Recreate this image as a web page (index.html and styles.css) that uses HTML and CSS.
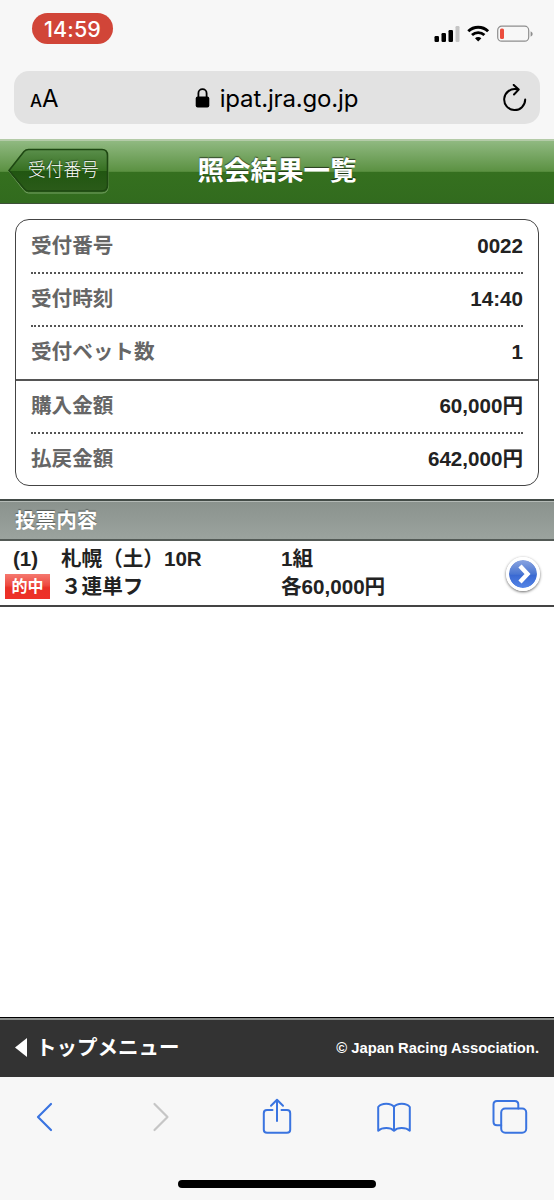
FILE: index.html
```html
<!DOCTYPE html>
<html lang="ja">
<head>
  <meta charset="UTF-8">
  <meta name="viewport" content="width=device-width, initial-scale=1">
  <title>照会結果一覧</title>
  <link rel="stylesheet" href="styles.css">
</head>
<body>

  <!-- ステータスバー -->
  <div class="status-bar">
    <span class="clock">14:59</span>
    <svg class="status-icons" width="100" height="18" viewBox="0 0 100 18">
      <rect x="0.5" y="11" width="4.5" height="6" rx="1.2"/>
      <rect x="7.5" y="8" width="4.5" height="9" rx="1.2"/>
      <rect x="14.5" y="5" width="4.5" height="12" rx="1.2"/>
      <rect x="21.5" y="1" width="4" height="16" rx="1.2" fill="#c5c5c5"/>
      <path d="M34.3 6.2a14.3 14.3 0 0 1 19.8 0M38 10a9.2 9.2 0 0 1 12.4 0" fill="none" stroke="#000" stroke-width="2.9"/>
      <path d="M44.2 16.5l-3.2-3.2a4.6 4.6 0 0 1 6.4 0z"/>
      <rect x="63.7" y="1.2" width="31" height="15" rx="4" fill="none" stroke="#8e8e8e" stroke-width="1.2"/>
      <rect x="66" y="3.5" width="4" height="10.5" rx="1.5" fill="#eb4d3d"/>
      <path d="M96.6 6.3q2.1 1 2.1 2.7t-2.1 2.7z" fill="#8e8e8e"/>
    </svg>
  </div>

  <!-- アドレスバー -->
  <div class="address-bar">
    <div class="text-size"><small>A</small>A</div>
    <div class="url">
      <svg width="15" height="20" viewBox="0 0 15 20">
        <rect x="0.7" y="8.5" width="13.6" height="11" rx="2"/>
        <path d="M3.4 9V5.2a4.1 4.1 0 0 1 8.2 0V9" fill="none" stroke="#000" stroke-width="1.8"/>
      </svg>
      <span>ipat.jra.go.jp</span>
    </div>
    <svg class="reload" width="24" height="28" viewBox="0 0 24 28" fill="none" stroke="#000" stroke-width="2" stroke-linecap="round" stroke-linejoin="round">
      <path d="M13.5 5.2A10.5 10.5 0 1 0 22.2 15.5M10.7 0.9l5 4.7-4.7 4.9"/>
    </svg>
  </div>

  <!-- ヘッダー -->
  <header class="header">
    <a class="back-btn" href="#">
      <svg width="101" height="46" viewBox="0 0 101 46">
        <defs>
          <linearGradient id="backBg" x1="0" y1="0" x2="0" y2="1">
            <stop offset="0" stop-color="#5a8f4b"/>
            <stop offset="0.51" stop-color="#377022"/>
            <stop offset="0.53" stop-color="#215611"/>
            <stop offset="1" stop-color="#2b5b19"/>
          </linearGradient>
        </defs>
        <path d="M1 23.5L16 4.5q1.8-2 4.5-2H94q6 0 6 6V39q0 6-6 6H20.5q-2.5 0-4.5-2.5z" fill="none" stroke="#77a165"/>
        <path d="M1 22.5L16 3.5q1.8-2 4.5-2H94q5.5 0 5.5 6V37q0 6-5.500 6H20.5q-2.5 0-4.5-2.5z" fill="url(#backBg)" stroke="#1e4712" stroke-width="1.6"/>
      </svg>
      <span>受付番号</span>
    </a>
    <h1>照会結果一覧</h1>
  </header>

  <main class="content">
    <!-- 受付情報 -->
    <dl class="summary">
      <div class="row"><dt>受付番号</dt><dd>0022</dd></div>
      <div class="row"><dt>受付時刻</dt><dd>14:40</dd></div>
      <div class="row"><dt>受付ベット数</dt><dd>1</dd></div>
      <div class="row divider"><dt>購入金額</dt><dd>60,000円</dd></div>
      <div class="row"><dt>払戻金額</dt><dd>642,000円</dd></div>
    </dl>

    <!-- 投票内容 -->
    <h2>投票内容</h2>
    <a class="bet" href="#">
      <div class="bet-no">
        <span>(1)</span>
        <span class="hit">的中</span>
      </div>
      <div class="bet-race">
        <span>札幌（土）10R</span>
        <span>３連単フ</span>
      </div>
      <div class="bet-amount">
        <span>1組</span>
        <span>各60,000円</span>
      </div>
      <span class="arrow">
        <svg width="14" height="20" viewBox="0 0 14 20"><path d="M3 2l7.5 8L3 18" fill="none" stroke="#fff" stroke-width="4.4"/></svg>
      </span>
    </a>
  </main>

  <!-- フッター -->
  <footer class="footer">
    <a class="top-menu" href="#">
      <svg width="12" height="19" viewBox="0 0 12 19"><path d="M12 0v19L0 9.5z" fill="#fff"/></svg>
      <span>トップメニュー</span>
    </a>
    <small>© Japan Racing Association.</small>
  </footer>

  <!-- ツールバー -->
  <nav class="toolbar">
    <div class="tools">
      <svg width="36" height="36" viewBox="0 0 36 36"><path d="M25 6L12 19l13 13"/></svg>
      <svg class="disabled" width="36" height="36" viewBox="0 0 36 36"><path d="M11.5 6l13 13-13 13"/></svg>
      <svg class="thin" width="36" height="36" viewBox="0 0 36 36"><path d="M13.5 12H8q-3.200 0-3.200 3.200v16.500q0 3.100 3.200 3.100h20q3.200 0 3.200-3.100V15.200Q31.200 12 28 12h-5.500M18 23V2M12 7.700l6-6 6 6"/></svg>
      <svg class="thin" width="36" height="36" viewBox="0 0 36 36"><path d="M18 9v23.500M18 9C15 4.800 5.500 4.800 2.200 9v23.700c4-3.600 12.300-3.600 15.800 0 3.500-3.600 11.800-3.600 15.800 0V9C30.500 4.800 21 4.800 18 9z"/></svg>
      <svg class="thin" width="36" height="36" viewBox="0 0 36 36"><rect x="9.2" y="10.5" width="25" height="24.2" rx="4"/><path d="M9.200 27.200H5q-3.500 0-3.500-3.500V6.500Q1.500 3 5 3h17.800q3.500 0 3.500 3.500v4"/></svg>
    </div>
    <div class="home-indicator"></div>
  </nav>

</body>
</html>
```
FILE: styles.css
```css
* {
  box-sizing: border-box;
}

body {
  margin: 0;
  height: 1200px;
  display: flex;
  flex-direction: column;
  font-family: "Liberation Sans", "Noto Sans CJK JP", sans-serif;
  background: #f7f7f7;
  color: #222;
  overflow: hidden;
}

a {
  color: inherit;
  text-decoration: none;
}

svg {
  display: block;
  flex: none;
}

/* ステータスバー */
.status-bar {
  height: 71px;
  padding: 13px 20px 0 32px;
  display: flex;
  justify-content: space-between;
  align-items: flex-start;
}

.clock {
  width: 81px;
  height: 31px;
  border-radius: 16px;
  background: #d14538;
  color: #fff;
  font: 500 21.5px/32px Inter, sans-serif;
  letter-spacing: 0.1px;
  text-align: center;
}

.status-icons {
  margin: 12px 0 0;
}

/* アドレスバー */
.address-bar {
  height: 53px;
  margin: 0 14px 15px;
  padding: 0 13px 0 16px;
  border-radius: 15px;
  background: #e2e2e2;
  color: #000;
  display: flex;
  align-items: center;
  justify-content: space-between;
  font-family: Inter, sans-serif;
}

.text-size {
  width: 40px;
  font-size: 24px;
  padding-top: 2px;
}

.text-size small {
  font-size: 17px;
  font-weight: 500;
}

.url {
  display: flex;
  align-items: center;
  gap: 10px;
  font-size: 24px;
  letter-spacing: -0.15px;
}

.url span {
  padding-top: 1px;
}

.reload {
  margin-left: 20px;
}

/* ヘッダー */
.header {
  position: relative;
  height: 65px;
  border-top: 2px solid #b4cba8;
  border-bottom: 1px solid #3d4f38;
  background: linear-gradient(#90b981, #5b9142 49%, #35701f 50%, #326b1e);
}

.header h1 {
  margin: 0;
  text-align: center;
  color: #fff;
  font-size: 26.5px;
  line-height: 61px;
  text-shadow: 0 -1px 1px rgba(0, 0, 0, 0.6);
}

.back-btn {
  position: absolute;
  left: 8px;
  top: 7px;
  color: #fff;
}

.back-btn span {
  position: absolute;
  left: 20px;
  top: 10px;
  font-size: 17.7px;
  line-height: 24px;
  white-space: nowrap;
  text-shadow: 0 -1px 1px rgba(0, 0, 0, 0.5);
  font-weight: 300;
}

/* 受付情報 */
.content {
  flex: 1;
  background: #fff;
  padding-top: 15px;
}

.summary {
  margin: 0 15px 13px;
  border: 1.5px solid #444;
  border-radius: 14px;
  height: 267px;
  display: grid;
  grid-template-rows: 52px repeat(4, 1fr);
  font-weight: bold;
  font-size: 20.6px;
}

.row {
  margin: 0 15px;
  padding-bottom: 5px;
  display: flex;
  justify-content: space-between;
  align-items: baseline;
  align-content: center;
  flex-wrap: wrap;
  border-top: 2px dotted #555;
}

.row:first-child {
  border-top: 0;
}

.row.divider {
  margin: 0;
  padding: 0 15px 5px;
  border-top: 2px solid #555;
}

.row dt {
  color: #666;
}

.row dd {
  margin: 0;
}

/* 投票内容 */
h2 {
  margin: 0;
  height: 42px;
  padding-left: 15px;
  border-top: 2px solid #434b47;
  border-bottom: 2px solid #535a56;
  background: linear-gradient(#8a928d, #9ba39e);
  box-shadow: inset 0 1px #b4bab6;
  color: #fff;
  font-size: 20.6px;
  line-height: 39px;
  text-shadow: 0 -1px 1px rgba(0, 0, 0, 0.4);
}

.bet {
  height: 66px;
  border-bottom: 2px solid #444;
  display: grid;
  grid-template-columns: 61px 220px 1fr 48px;
  font-weight: bold;
  font-size: 20.6px;
  line-height: 28px;
}

.bet-no,
.bet-race,
.bet-amount {
  display: flex;
  flex-direction: column;
  padding-top: 4px;
}

.bet-no > span:first-child {
  padding-left: 13px;
}

.hit {
  width: 45px;
  height: 25px;
  margin: 1px 0 0 5px;
  background: linear-gradient(#f5786f, #ee4a40 45%, #e93026 55%, #ee3029);
  color: #fff;
  font-size: 16px;
  line-height: 25px;
  text-align: center;
}

.arrow {
  width: 34px;
  height: 34px;
  margin-top: 16px;
  padding-left: 1px;
  border: 3px solid #fff;
  border-radius: 50%;
  background: linear-gradient(#8aa4e0, #4a76d2 50%, #3a69d3 55%, #5585e6) padding-box;
  box-shadow: 0 1px 3px rgba(0, 0, 0, 0.6);
  display: flex;
  align-items: center;
  justify-content: center;
}

/* フッター */
.footer {
  height: 60px;
  padding: 0 15px;
  border-top: 1px solid #000;
  background: #333;
  box-shadow: inset 0 2px #8a8d8b;
  color: #fff;
  display: flex;
  align-items: center;
  justify-content: space-between;
  font-weight: bold;
}

.top-menu {
  display: flex;
  align-items: center;
  gap: 9px;
  font-size: 20.5px;
}

.top-menu span {
  padding-bottom: 3px;
}

.footer small {
  font-size: 14.8px;
}

/* ツールバー */
.toolbar {
  height: 123px;
  padding: 21px 26px 0;
}

.tools {
  display: flex;
  justify-content: space-between;
}

.tools svg {
  fill: none;
  stroke: #3a74e0;
  stroke-width: 2.2;
  stroke-linecap: round;
  stroke-linejoin: round;
}

.tools svg.thin {
  stroke-width: 2;
}

.tools svg.disabled {
  stroke: #c6c6c6;
}

.home-indicator {
  width: 198px;
  height: 8px;
  margin: 46px auto 0;
  border-radius: 4px;
  background: #000;
}
```
